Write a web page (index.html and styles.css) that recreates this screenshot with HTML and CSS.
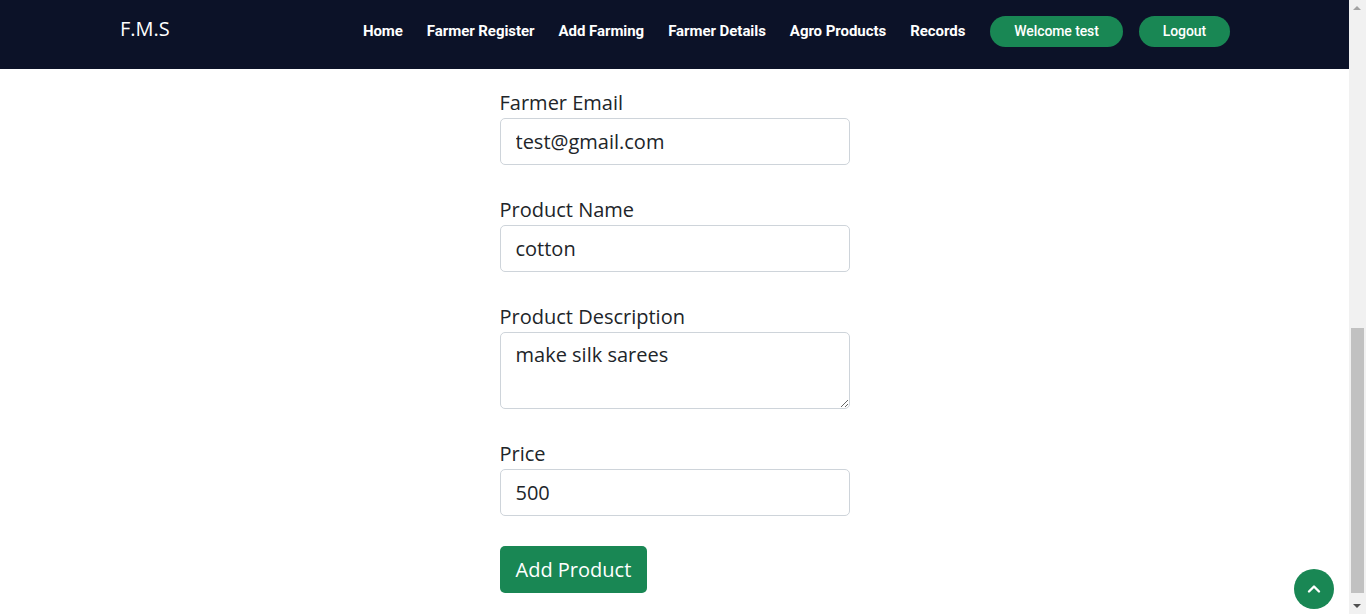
FILE: index.html
```html
<!DOCTYPE html>
<html lang="en">
<head>
<meta charset="utf-8">
<title>F.M.S - Agro Products</title>
<link rel="stylesheet" href="styles.css">
</head>
<body>
<div class="viewport">
  <header class="navbar">
    <div class="nav-inner">
      <a class="brand" href="#">F.M.S</a>
      <nav class="nav-links">
        <a href="#">Home</a>
        <a href="#">Farmer Register</a>
        <a href="#">Add Farming</a>
        <a href="#">Farmer Details</a>
        <a href="#">Agro Products</a>
        <a href="#">Records</a>
        <a class="pill pill-welcome" href="#">Welcome test</a>
        <a class="pill pill-logout" href="#">Logout</a>
      </nav>
    </div>
  </header>
  <main class="content">
    <form class="product-form">
      <div class="field">
        <label for="email">Farmer Email</label>
        <input id="email" class="control" type="text" value="test@gmail.com">
      </div>
      <div class="field">
        <label for="pname">Product Name</label>
        <input id="pname" class="control" type="text" value="cotton">
      </div>
      <div class="field">
        <label for="pdesc">Product Description</label>
        <textarea id="pdesc" class="control control-area">make silk sarees</textarea>
      </div>
      <div class="field">
        <label for="price">Price</label>
        <input id="price" class="control" type="text" value="500">
      </div>
      <button class="btn-submit" type="button">Add Product</button>
    </form>
  </main>
  <a class="back-top" href="#" aria-label="Back to top">
    <svg width="16" height="16" viewBox="0 0 16 16"><path d="M3 10.5 L8 5.5 L13 10.5" fill="none" stroke="#fff" stroke-width="2.4" stroke-linecap="round" stroke-linejoin="round"/></svg>
  </a>
</div>
<div class="scrollbar">
  <div class="sb-arrow sb-up"></div>
  <div class="sb-track"><div class="sb-thumb"></div></div>
  <div class="sb-arrow sb-down"></div>
</div>
</body>
</html>
```
FILE: styles.css
```css
* { box-sizing: border-box; }
html, body { margin: 0; padding: 0; height: 614px; overflow: hidden; }
body {
  display: flex;
  font-family: "Open Sans", "Liberation Sans", sans-serif;
  color: #212529;
  background: #fff;
}
.viewport {
  flex: 1;
  position: relative;
  display: flex;
  flex-direction: column;
  min-width: 0;
}
.navbar {
  height: 69px;
  background: #0c1228;
  flex: none;
  position: relative;
  z-index: 1;
}
.nav-inner {
  height: 100%;
  margin: 0 119px 0 120px;
  display: flex;
  align-items: center;
  justify-content: space-between;
}
.brand {
  color: #fff;
  text-decoration: none;
  font-size: 20px;
  margin-top: -13px;
  font-family: "Open Sans", sans-serif;
}
.nav-links {
  display: flex;
  align-items: center;
  gap: 24px;
  margin-top: -7px;
}
.nav-links a {
  color: #fff;
  text-decoration: none;
  font-family: Roboto, "Liberation Sans", sans-serif;
  font-weight: 700;
  font-size: 15px;
  letter-spacing: -0.05px;
}
.nav-links .pill {
  background: #198754;
  border-radius: 50px;
  height: 31px;
  display: flex;
  align-items: center;
  padding: 0 24px;
  font-weight: 500;
  font-size: 14px;
  letter-spacing: -0.1px;
}
.nav-links .pill-welcome { margin-left: 1px; }
.nav-links .pill-logout { margin-left: -8px; }
.content {
  flex: 1;
  display: flex;
  justify-content: center;
  padding-top: 18px;
}
.product-form {
  width: 350px;
  display: flex;
  flex-direction: column;
}
.field { margin-bottom: 29px; display: flex; flex-direction: column; }
.field label {
  font-size: 20px;
  line-height: 30px;
  margin-top: 1px;
}
.control {
  font-family: "Open Sans", sans-serif;
  font-size: 20px;
  line-height: 30px;
  color: #212529;
  padding: 7px 15px;
  border: 1px solid #ced4da;
  border-radius: 5px;
  height: 47px;
  width: 100%;
  background: #fff;
}
.control-area { height: 77px; resize: vertical; }
.btn-submit {
  align-self: flex-start;
  margin-top: 1px;
  background: #198754;
  color: #fff;
  border: 0;
  border-radius: 5px;
  font-family: "Open Sans", sans-serif;
  font-size: 20px;
  height: 47px;
  padding: 0 16px;
}
.back-top {
  position: absolute;
  right: 15px;
  bottom: 5px;
  width: 40px;
  height: 40px;
  border-radius: 50%;
  background: #198754;
  display: flex;
  align-items: center;
  justify-content: center;
}
.scrollbar {
  width: 17px;
  flex: none;
  background: #f1f1f1;
  display: flex;
  flex-direction: column;
}
.sb-arrow { height: 17px; position: relative; flex: none; }
.sb-up::after, .sb-down::after {
  content: "";
  position: absolute;
  left: 4px;
  border-left: 4px solid transparent;
  border-right: 4px solid transparent;
}
.sb-up::after { top: 6px; border-bottom: 4px solid #a3a3a3; }
.sb-down::after { top: 7px; border-top: 4px solid #505050; }
.sb-track { flex: 1; padding: 311px 2px 3px; }
.sb-thumb { height: 265px; background: #c1c1c1; }
```
